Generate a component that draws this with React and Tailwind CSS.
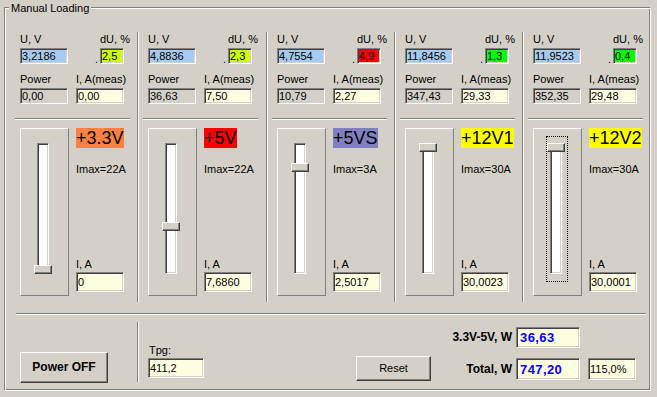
import React from "react";

// classic win2k bevels
const sunken =
  "border border-t-[#808080] border-l-[#808080] border-r-white border-b-white shadow-[inset_1px_1px_0_#404040,inset_-1px_-1px_0_#d4d0c8]";
const raised =
  "border border-t-white border-l-white border-r-[#404040] border-b-[#404040] shadow-[inset_-1px_-1px_0_#808080]";

const CHANNELS = [
  { u: "3,2186", du: "2,5", duBg: "bg-[#ccff00]", power: "0,00", iMeas: "0,00", name: "+3.3V", nameBg: "bg-[#ff8040]", imax: 22, i: 0, iText: "0", w: "w-[128px]", first: true },
  { u: "4,8836", du: "2,3", duBg: "bg-[#ccff00]", power: "36,63", iMeas: "7,50", name: "+5V", nameBg: "bg-[#ff0000]", imax: 22, i: 7.686, iText: "7,6860", w: "w-[129px]" },
  { u: "4,7554", du: "4,9", duBg: "bg-[#ff0000]", power: "10,79", iMeas: "2,27", name: "+5VS", nameBg: "bg-[#8080c0]", imax: 3, i: 2.5017, iText: "2,5017", w: "w-[128px]" },
  { u: "11,8456", du: "1,3", duBg: "bg-[#00ff00]", power: "347,43", iMeas: "29,33", name: "+12V1", nameBg: "bg-[#ffff00]", imax: 30, i: 30.0023, iText: "30,0023", w: "w-[128px]" },
  { u: "11,9523", du: "0,4", duBg: "bg-[#00ff00]", power: "352,35", iMeas: "29,48", name: "+12V2", nameBg: "bg-[#ffff00]", imax: 30, i: 30.0001, iText: "30,0001", w: "w-[128px]", focused: true },
];

function Field({ className = "", children }) {
  return (
    <div className={`${sunken} flex items-center pl-[1px] leading-[13px] whitespace-nowrap overflow-hidden ${className}`}>
      {children}
    </div>
  );
}

function Slider({ value, max, focused }) {
  // thumb travel is 122px, top = max
  const t = Math.round(122 * (1 - Math.min(value / max, 1)));
  return (
    <div className="w-[49px] h-[168px] border border-t-white border-l-white border-r-[#808080] border-b-[#808080] pt-[14px] pl-[16px]">
      <div className={`relative w-[12px] h-[131px] bg-white ${sunken}`}>
        {focused && (
          <div className="absolute left-[-5px] top-[-8px] w-[22px] h-[146px] border border-dotted border-black" />
        )}
        <div className={`absolute left-[-4px] w-[18px] h-[9px] bg-[#d4d0c8] ${raised}`} style={{ top: t - 1 }} />
      </div>
    </div>
  );
}

function Channel({ ch }) {
  return (
    <div
      className={`${ch.w} h-[270px] pt-[1px] ${
        ch.first ? "pl-[11px]" : "pl-[10px] border-l border-l-[#808080] shadow-[inset_1px_0_0_white]"
      }`}
    >
      <div className="flex h-[13px]">
        <span className="w-[80px]">U, V</span>
        <span>dU, %</span>
      </div>
      <div className="mt-[2px] flex h-[16px]">
        <Field className="w-[48px] h-[16px] bg-[#a6caf0]">{ch.u}</Field>
        <span className="w-[32px] pl-[27px] pt-[5px] leading-[13px]">.</span>
        <Field className={`w-[24px] h-[16px] ${ch.duBg}`}>{ch.du}</Field>
      </div>

      <div className="mt-[9px] flex h-[13px]">
        <span className="w-[56px]">Power</span>
        <span>I, A(meas)</span>
      </div>
      <div className="mt-[2px] flex h-[16px]">
        <Field className="w-[48px] h-[16px] bg-[#d4d0c8]">{ch.power}</Field>
        <Field className="ml-[8px] w-[48px] h-[16px] bg-[#ffffe1]">{ch.iMeas}</Field>
      </div>

      <div className="mt-[14px] ml-[-5px] w-[115px] h-[2px] border-t border-t-[#808080] border-b border-b-white" />

      <div className="mt-[8px] flex h-[168px]">
        <Slider value={ch.i} max={ch.imax} focused={ch.focused} />
        <div className="ml-[7px] w-[48px] flex flex-col">
          <span className={`self-start h-[20px] text-[18px] leading-[20px] whitespace-nowrap ${ch.nameBg}`}>
            {ch.name}
          </span>
          <span className="mt-[15px] whitespace-nowrap">Imax={ch.imax}A</span>
          <span className="mt-auto">I, A</span>
          <Field className="mt-[1px] mb-[4px] w-[48px] h-[20px] bg-[#ffffe1]">{ch.iText}</Field>
        </div>
      </div>
    </div>
  );
}

export default function App() {
  return (
    <div className="w-[657px] h-[397px] overflow-hidden bg-[#d4d0c8] pt-[7px] pl-[4px] text-black text-[11px] leading-[13px] font-['Liberation_Sans',Arial,sans-serif]">
      <div className="relative w-[647px] h-[384px] border border-t-[#808080] border-l-[#808080] border-r-white border-b-white shadow-[inset_1px_1px_0_white,inset_-1px_-1px_0_#808080] flex flex-col">
        <span className="absolute top-[-6px] left-[4px] px-[2px] bg-[#d4d0c8]">Manual Loading</span>

        <div className="pt-[24px] pl-[4px] flex">
          {CHANNELS.map((ch) => (
            <Channel key={ch.name} ch={ch} />
          ))}
        </div>

        <div className="mt-[11px] ml-[11px] w-[630px] h-[2px] border-t border-t-[#808080] border-b border-b-white" />

        <div className="flex items-start">
          <button className={`ml-[15px] mt-[37px] w-[88px] h-[31px] bg-[#d4d0c8] font-bold text-[12px] ${raised}`}>
            Power OFF
          </button>
          <div className="ml-[29px] mt-[7px] w-[2px] h-[60px] border-l border-l-[#808080] border-r border-r-white" />
          <div className="ml-[9px] mt-[29px] flex flex-col">
            <span className="pl-[1px]">Tpg:</span>
            <Field className="mt-[1px] w-[56px] h-[20px] bg-[#ffffe1]">411,2</Field>
          </div>
          <button className={`ml-[152px] mt-[41px] w-[75px] h-[25px] bg-[#d4d0c8] ${raised}`}>Reset</button>
          <div className="ml-[1px] mt-[12px] flex flex-col">
            <div className="flex items-center h-[21px]">
              <span className="w-[80px] text-right font-bold text-[12px] whitespace-nowrap">3.3V-5V, W</span>
              <Field className="ml-[4px] w-[64px] h-[21px] pl-[3px] bg-[#ffffe1] text-[#0000ff] font-bold text-[13px] tracking-[0.4px]">
                36,63
              </Field>
            </div>
            <div className="mt-[10px] flex items-center h-[22px]">
              <span className="w-[80px] text-right font-bold text-[12px] whitespace-nowrap">Total, W</span>
              <Field className="ml-[4px] w-[64px] h-[22px] pl-[3px] bg-[#ffffe1] text-[#0000ff] font-bold text-[13px] tracking-[0.4px]">
                747,20
              </Field>
              <Field className="ml-[8px] w-[48px] h-[22px] bg-[#ffffe1]">115,0%</Field>
            </div>
          </div>
        </div>
      </div>
    </div>
  );
}
